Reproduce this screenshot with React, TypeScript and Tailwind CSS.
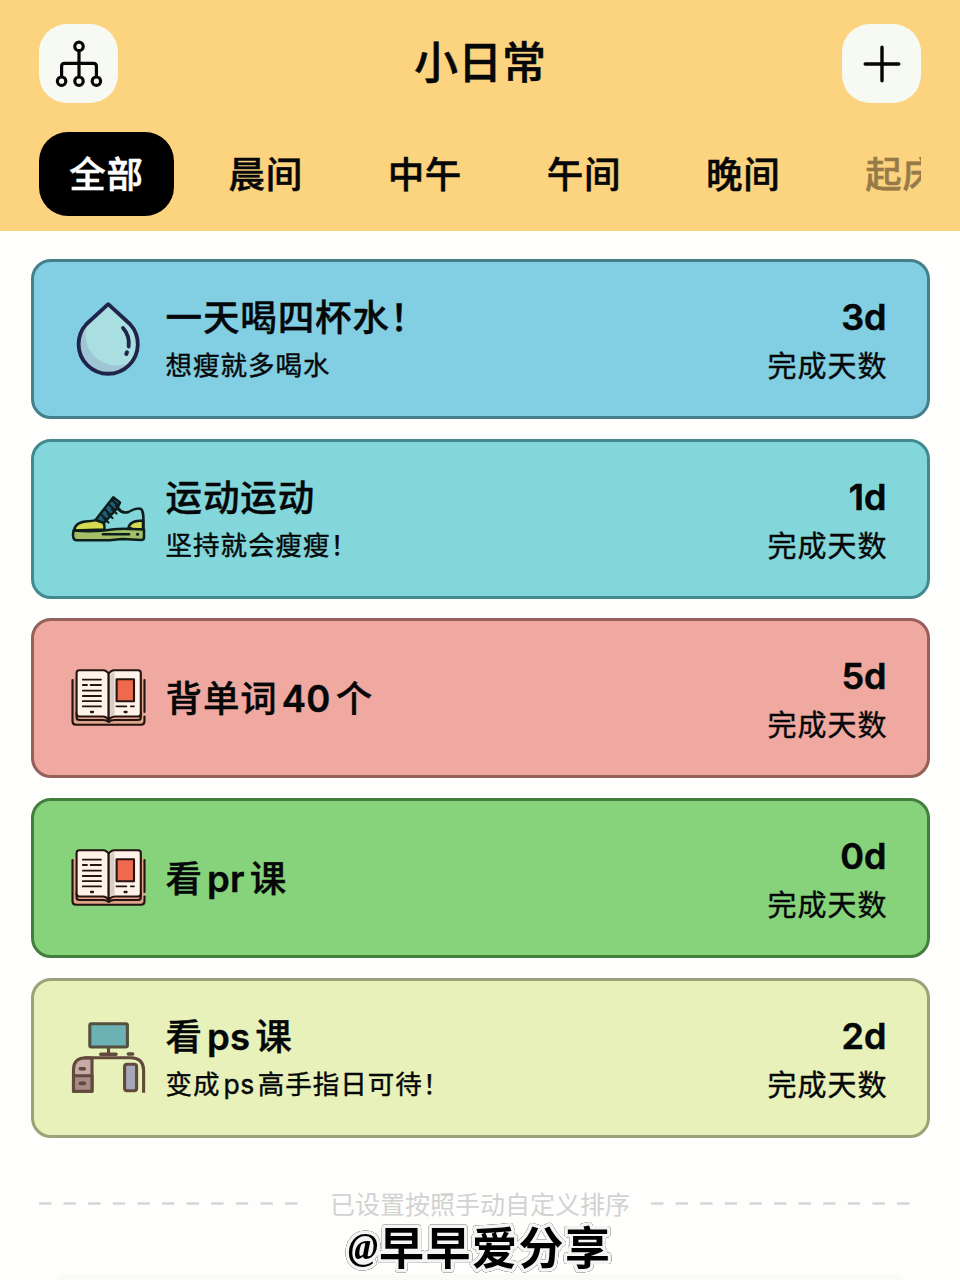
import React, { useState } from 'react';

type IconName = 'drop' | 'shoe' | 'book' | 'desk';

interface Habit {
  id: number;
  title: string;
  note?: string;
  days: number;
  icon: IconName;
  color: string;
}

const TABS = ['全部', '晨间', '中午', '午间', '晚间', '起床'];

const HABITS: Habit[] = [
  { id: 1, title: '一天喝四杯水！', note: '想瘦就多喝水', days: 3, icon: 'drop', color: 'bg-[#82cee2] border-[#457f8a]' },
  { id: 2, title: '运动运动', note: '坚持就会瘦瘦！', days: 1, icon: 'shoe', color: 'bg-[#83d6da] border-[#438a90]' },
  { id: 3, title: '背单词40个', days: 5, icon: 'book', color: 'bg-[#f0a9a1] border-[#96605a]' },
  { id: 4, title: '看pr课', days: 0, icon: 'book', color: 'bg-[#87d37b] border-[#437f3c]' },
  { id: 5, title: '看ps课', note: '变成ps高手指日可待！', days: 2, icon: 'desk', color: 'bg-[#e8f1b9] border-[#9ba277]' },
];

const DropIcon = () => (
  <svg viewBox="0 0 76 76" className="w-[76px] h-[76px]" fill="none">
    <path d="M38.2 3.2 L16.5 23 A29.6 29.6 0 1 0 59.9 23 Z" fill="#a9dfe1" />
    <path d="M14 26 C4 43 10 69 37 72 C52 73 60 67 65 58 C54 67 40 66 29 59 C17 51 13 38 17 23 Z" fill="#a0c5d4" />
    <path d="M38.2 3.2 L16.5 23 A29.6 29.6 0 1 0 59.9 23 Z" stroke="#20244a" strokeWidth="3.8" strokeLinejoin="round" />
    <path d="M53 27 C57.5 32 59.5 38 58.7 45.5" stroke="#20244a" strokeWidth="3.8" strokeLinecap="round" />
    <path d="M57 51.3 L56.3 53" stroke="#20244a" strokeWidth="4" strokeLinecap="round" />
  </svg>
);

const ShoeIcon = () => (
  <svg viewBox="0 0 76 76" className="w-[76px] h-[76px]" fill="none" stroke="#0d1f1c" strokeWidth="2.5" strokeLinecap="round" strokeLinejoin="round">
    <path d="M4 49.5 C5 43 11 40.5 18 40.3 C23 40.2 26 39 28 38.5 C32 39 35 42 34.5 48.5 Z" fill="#d5dc52" />
    <path d="M58.5 46.5 C59.5 42 65 39.5 73 39.5 V48.5 L62 48 Z" fill="#d5dc52" />
    <path d="M25.5 39 L43.3 16.2 L50 21.5 L47.5 27 L34 42 Z" fill="#215f78" />
    <path d="M30.5 33 L36 38 M34.5 28 L40 33.5 M38.5 23 L45 29 M42 19 L48 24.5 M34 37.5 L38.5 41.5 M38 33 L42.5 37 M42 28.5 L46.5 32.5 M46 25 L50 28.5" strokeWidth="2.2" />
    <path d="M48 28 C51 31 54.5 32.5 58.5 31 C63 28.5 67 26.5 71 28 C74 30.5 73.5 38 73.5 48" />
    <path d="M3.5 49.5 C15 50.5 33 50 44 48.3 C55 47 60 48.5 74 48.5 V56.5 C74 58.5 73 59 71 59 L53 58 C47 58 42 59.3 36 59.3 H7 C4 59.3 3 57 3 54 Z" fill="#a3bd68" />
    <path d="M33 53.3 H59" />
    <path d="M67.5 53.3 H67.6" strokeWidth="3" />
  </svg>
);

const BookIcon = () => (
  <svg viewBox="0 0 76 76" className="w-[76px] h-[76px]" fill="none" stroke="#24130f" strokeWidth="2.1" strokeLinecap="round" strokeLinejoin="round">
    <path d="M6 18 H4.5 Q2.5 18 2.5 20 V61.5 Q2.5 64.8 6 64.8 H71.3 Q74.6 64.8 74.6 61.5 V20 Q74.6 18 72.5 18 H71 Z" fill="#dda58c" stroke="none" />
    <path d="M2.5 20 V61.3 Q2.5 64.8 6 64.8 H71 Q74.5 64.8 74.5 61.3 V56.5 M74.5 52 V20" />
    <path d="M6.6 53 V57.5 Q6.6 60 9.5 60 H33 Q37 60 38.7 62 Q40.4 60 44.5 60 H68 Q70.8 60 70.8 57.5 V53" fill="#eba993" />
    <path d="M6.6 12.8 Q6.6 10.2 9.3 10.2 H33 Q37 10.4 38.7 14 V60 Q36.5 56.5 33 56.5 H9.3 Q6.6 56.5 6.6 53.5 Z" fill="#fff2e8" />
    <path d="M70.8 12.8 Q70.8 10.2 68 10.2 H44.5 Q40.4 10.4 38.7 14 V60 Q41 56.5 44.5 56.5 H68 Q70.8 56.5 70.8 53.5 Z" fill="#fff2e8" />
    <path d="M40.2 15 Q41.4 12.5 44.5 11.8 V55.2 Q42 55.5 40.2 57 Z" fill="#d9cbc7" stroke="none" />
    <rect x="46.6" y="19.2" width="17.4" height="22" fill="#ef694c" />
    <path d="M12.8 19.6 H31 M12.8 25 H17 M20.6 25 H31 M12.8 30.6 H31 M12.8 36 H31 M12.8 41.2 H31 M12.8 46.4 H31 M46.4 46.3 H56.4 M60.8 46.3 H64" strokeWidth="1.8" />
    <path d="M21 52 H23 M54.6 52 H56.6" strokeWidth="2.3" />
  </svg>
);

const DeskIcon = () => (
  <svg viewBox="0 0 76 76" className="w-[76px] h-[76px]" fill="none" stroke="#62483d" strokeWidth="3.1" strokeLinejoin="round">
    <rect x="19.8" y="3.8" width="37.6" height="23.2" rx="1.5" fill="#6cb2b5" stroke="#55503f" />
    <path d="M38.5 28 V34" />
    <path d="M30.8 34.2 H46 M58.4 34 H62.6" strokeWidth="3.6" strokeLinecap="round" />
    <path d="M3.5 71.2 V49 Q4 38.5 14 38 H22 V71.2 Z" fill="#c5aca7" />
    <path d="M3.5 55.8 H22 V71.2 H3.5 Z" fill="#a98b85" />
    <path d="M10.3 48.8 H14.3 M10.3 63.4 H14.3" strokeWidth="3.6" strokeLinecap="round" />
    <path d="M14 37.8 H61 Q73.2 38 73.6 50 V72.7" />
    <rect x="54.6" y="44.2" width="12" height="26.6" rx="2.5" fill="#a5a8b8" />
  </svg>
);

const ICONS: Record<IconName, React.FC> = {
  drop: DropIcon,
  shoe: ShoeIcon,
  book: BookIcon,
  desk: DeskIcon,
};

// Latin runs get a bit of air between them and the Chinese characters
const MixedText: React.FC<{ text: string; latinClass: string }> = ({ text, latinClass }) => (
  <>
    {text.split(/([A-Za-z0-9]+)/).map((part, i) =>
      i % 2 ? (
        <span key={i} className={latinClass}>{part}</span>
      ) : (
        <React.Fragment key={i}>{part}</React.Fragment>
      )
    )}
  </>
);

const HabitCard: React.FC<{ habit: Habit }> = ({ habit }) => {
  const Icon = ICONS[habit.icon];

  return (
    <div className={`flex h-40 items-center justify-between rounded-[20px] border-3 pl-9 pr-10 ${habit.color}`}>
      <div className="flex items-center gap-5">
        <Icon />
        <div className={`whitespace-nowrap ${habit.note ? 'pt-[5px]' : 'pt-0.5'}`}>
          <h3 className="text-[36.5px] leading-[48px] font-medium tracking-[0.9px] [-webkit-text-stroke:0.4px]">
            <MixedText text={habit.title} latinClass="ml-1 mr-[5px] font-semibold tracking-[0.3px]" />
          </h3>
          {habit.note && (
            <p className="text-[26.5px] leading-[47px] tracking-[1px] [-webkit-text-stroke:0.4px]">
              <MixedText text={habit.note} latinClass="ml-[3px] mr-[3px] tracking-[0.5px]" />
            </p>
          )}
        </div>
      </div>
      <div className="flex flex-col items-end pt-2 whitespace-nowrap">
        <span className="text-[36px] leading-[47px] font-semibold [-webkit-text-stroke:0.6px]">{habit.days}d</span>
        <span className="text-[29px] leading-[51px] tracking-[1px] -mr-px [-webkit-text-stroke:0.4px]">完成天数</span>
      </div>
    </div>
  );
};

const Dashes = () => (
  <svg viewBox="0 0 260 3" className="h-[3px] w-[260px]">
    <path d="M0 1.5 H260" stroke="#d6d6d6" strokeWidth="2.6" strokeDasharray="12.4 12.2" />
  </svg>
);

export default function App() {
  const [activeTab, setActiveTab] = useState(TABS[0]);

  return (
    <div className="relative h-[1280px] w-[960px] overflow-hidden bg-[#fefefd] font-[Inter,'Noto_Sans_CJK_SC',sans-serif] text-[#050708]">
      <header className="h-[231px] bg-[#fcd37f] px-[39px] pt-6">
        <div className="flex items-center justify-between">
          <button className="flex h-[79px] w-[79px] items-center justify-center rounded-[28px] bg-[#f7f9f3]">
            <svg viewBox="0 0 48 48" className="h-12 w-12" fill="none" stroke="#050505" strokeWidth="3.2">
              <circle cx="24" cy="6.4" r="4.2" />
              <circle cx="6.6" cy="41.2" r="4.2" />
              <circle cx="24" cy="41.2" r="4.2" />
              <circle cx="41.4" cy="41.2" r="4.2" />
              <path d="M24 10.6 V37 M6.6 37 V26.4 Q6.6 23.4 9.6 23.4 H38.4 Q41.4 23.4 41.4 26.4 V37" />
            </svg>
          </button>
          <h1 className="text-[44px] leading-[79px] font-medium [-webkit-text-stroke:0.5px]">小日常</h1>
          <button className="flex h-[79px] w-[79px] items-center justify-center rounded-[28px] bg-[#f7f9f3]">
            <svg viewBox="0 0 40 40" className="h-10 w-10" stroke="#050505" strokeWidth="3.4" strokeLinecap="round">
              <path d="M20 3.2 V36.8 M3.2 20 H36.8" />
            </svg>
          </button>
        </div>

        <nav className="mt-[29px] flex gap-[24.2px] overflow-hidden">
          {TABS.map((tab) => (
            <button
              key={tab}
              onClick={() => setActiveTab(tab)}
              className={`h-[84px] w-[135px] shrink-0 rounded-[29px] pt-0.5 text-[36.5px] font-medium tracking-[0.7px] whitespace-nowrap [-webkit-text-stroke:0.5px] ${
                tab === activeTab ? 'bg-black text-white' : ''
              } ${tab === '起床' ? 'text-[#967b49]' : ''}`}
            >
              {tab}
            </button>
          ))}
        </nav>
      </header>

      <main className="flex flex-col gap-[19.7px] px-[30.5px] pt-7">
        {HABITS.map((habit) => (
          <HabitCard key={habit.id} habit={habit} />
        ))}
      </main>

      <div className="mt-[46px] flex items-center pl-[39px]">
        <Dashes />
        <span className="mr-[21px] ml-[31px] pt-0.5 text-[25px] leading-[38px] text-[#d2d2d2]">已设置按照手动自定义排序</span>
        <Dashes />
      </div>

      <div className="absolute right-14 bottom-0 left-14 h-1.5 rounded-t-full bg-[#fafaf7]" />
      <svg viewBox="0 0 290 62" className="absolute top-[1218px] left-[335px] h-[62px] w-[290px] overflow-visible [filter:drop-shadow(0_0_0.5px_#555)_drop-shadow(0_0_0.4px_#777)]">
        <g fill="#000" stroke="#f4f4f2" strokeWidth="7" strokeLinejoin="round" paintOrder="stroke">
          <text x="13" y="41" className="font-['Liberation_Serif',serif] text-[37px] font-bold italic" textLength="30" lengthAdjust="spacingAndGlyphs">@</text>
          <text x="44" y="47" className="font-['Noto_Sans_CJK_SC',sans-serif] text-[45px] font-bold" textLength="231">早早爱分享</text>
        </g>
      </svg>
    </div>
  );
}
